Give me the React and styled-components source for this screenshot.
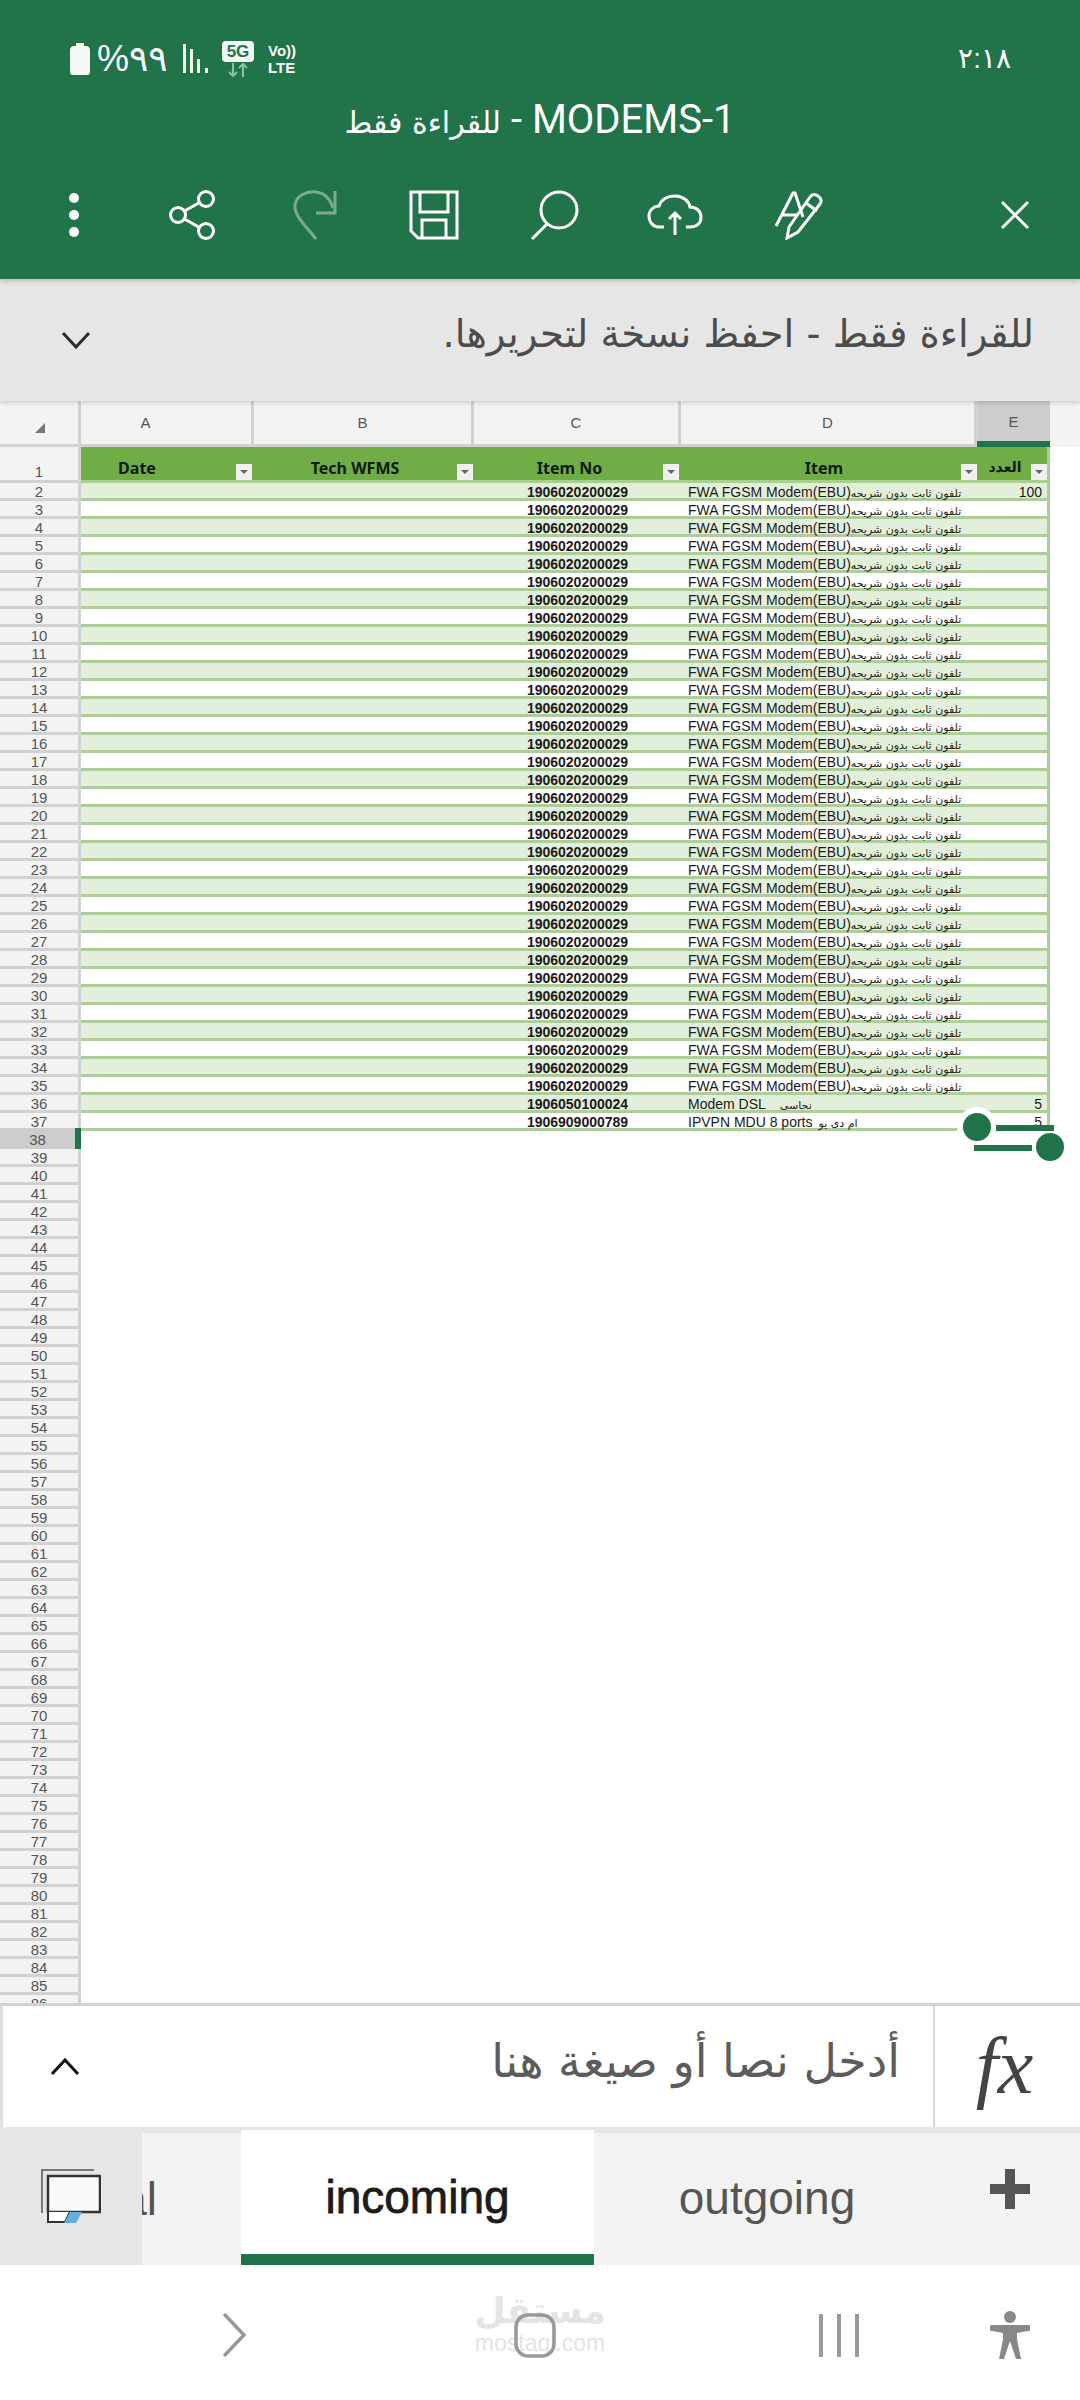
import React from 'react'
import styled, { createGlobalStyle } from 'styled-components'

const GREEN = '#21734a'
const ARABIC = '"DejaVu Sans", "Noto Sans", sans-serif'

const GlobalStyle = createGlobalStyle`
  html, body { margin: 0; padding: 0; background: #fff; }
  * { box-sizing: border-box; }
`

const FWA = ['FWA FGSM Modem(EBU)', 'تلفون ثابت بدون شريحه', 0]

function rowData(n) {
  if (n === 36) return { no: '1906050100024', item: ['Modem DSL', 'نحاسى', 14], qty: '5' }
  if (n === 37) return { no: '1906909000789', item: ['IPVPN MDU 8 ports', 'ام دى يو', 6], qty: '5' }
  return { no: '1906020200029', item: FWA, qty: n === 2 ? '100' : '' }
}

const range = (a, b) => Array.from({ length: b - a + 1 }, (_, i) => a + i)

function Icon({ w, h, children }) {
  return (
    <svg width={w} height={h} viewBox={`0 0 ${w} ${h}`} fill="none" stroke="#fff" strokeWidth="3">
      {children}
    </svg>
  )
}

function FilterButton({ $right }) {
  return (
    <Filter $right={$right}>
      <FilterArrow />
    </Filter>
  )
}

export default function App() {
  return (
    <Screen>
      <GlobalStyle />
      <TopBar>
        <StatusBar>
          <StatusLeft>
            <svg width="22" height="32" viewBox="0 0 22 32">
              <path d="M7 0h8v3h3a4 4 0 0 1 3 3v23a3 3 0 0 1-3 3H4a3 3 0 0 1-3-3V6a4 4 0 0 1 3-3h3z" fill="#f4f9f6" />
            </svg>
            <Percent>%٩٩</Percent>
            <svg width="30" height="32" viewBox="0 0 30 32" fill="#eef5f1">
              <rect x="1" y="1" width="3" height="29" />
              <rect x="8" y="6" width="3" height="24" />
              <rect x="15" y="16" width="3" height="14" />
              <rect x="23" y="25" width="3" height="5" />
            </svg>
            <FiveG>
              <FiveGBadge>5G</FiveGBadge>
              <svg width="24" height="14" viewBox="0 0 24 14" fill="none" stroke="#8fbfa6" strokeWidth="2">
                <path d="M7 0v13M3 9l4 4 4-4M17 14V1M13 5l4-4 4 4" />
              </svg>
            </FiveG>
            <Volte>
              <span>Vo))</span>
              <span>LTE</span>
            </Volte>
          </StatusLeft>
          <Clock>٢:١٨</Clock>
        </StatusBar>
        <Title dir="rtl">
          MODEMS-1 - <TitleArabic>للقراءة فقط</TitleArabic>
        </Title>
        <Toolbar>
          <ToolSlot $x={74}>
            <svg width="12" height="44" viewBox="0 0 12 44" fill="#fff">
              <ellipse cx="6" cy="5" rx="5" ry="5" />
              <ellipse cx="6" cy="22" rx="5" ry="5" />
              <ellipse cx="6" cy="39" rx="5" ry="5" />
            </svg>
          </ToolSlot>
          <ToolSlot $x={193}>
            <Icon w={48} h={50}>
              <circle cx="37" cy="9" r="7.5" />
              <circle cx="9" cy="25" r="7.5" />
              <circle cx="37" cy="41" r="7.5" />
              <path d="M15.5 21 30.5 12.5M15.5 29 30.5 37.5" />
            </Icon>
          </ToolSlot>
          <ToolSlot $x={315}>
            <Icon w={46} h={50}>
              <g opacity="0.4">
                <path d="M24 49C14 36 2 26 3 15 4 6 14 1 24 2c9 1 15 8 17 16" />
                <path d="M43 1v22H24" />
              </g>
            </Icon>
          </ToolSlot>
          <ToolSlot $x={434}>
            <Icon w={50} h={50}>
              <path d="M2 2h46v46H9l-7-7z" />
              <path d="M11 2v20h28V2M13 48V30h24v18" />
            </Icon>
          </ToolSlot>
          <ToolSlot $x={554}>
            <Icon w={50} h={50}>
              <ellipse cx="30" cy="20" rx="18" ry="18" />
              <path d="M19 33 3 49" />
            </Icon>
          </ToolSlot>
          <ToolSlot $x={675}>
            <Icon w={56} h={42}>
              <path d="M17 33H12C6 33 2 28 2 22c0-6 5-10 10-10C14 6 20 2 28 2c8 0 14 5 15 11 6 0 11 4 11 10s-4 10-11 10h-4" />
              <path d="M28 41V19M22 25l6-6 6 6" />
            </Icon>
          </ToolSlot>
          <ToolSlot $x={799}>
            <Icon w={50} h={50}>
              <path d="M2 36 19 3h2l8 24M9 25h14" />
              <path d="M13 48l2-11 21-30c2-3 5-3 8-1s4 5 2 8L24 42z" />
              <path d="M32 13l11 8" />
            </Icon>
          </ToolSlot>
          <ToolSlot $x={1015}>
            <Icon w={30} h={30}>
              <path d="M2 2l26 26M28 2 2 28" />
            </Icon>
          </ToolSlot>
        </Toolbar>
      </TopBar>

      <ReadOnlyBar>
        <svg width="30" height="18" viewBox="0 0 30 18" fill="none" stroke="#2c2c2c" strokeWidth="3">
          <path d="M2 2l13 14L28 2" />
        </svg>
        <ReadOnlyText dir="rtl">للقراءة فقط - احفظ نسخة لتحريرها.</ReadOnlyText>
      </ReadOnlyBar>

      <Sheet>
        <ColumnHeaders>
          <Corner>
            <CornerMark />
          </Corner>
          <ColumnHead $w={173} $pad={41}>A</ColumnHead>
          <ColumnHead $w={220}>B</ColumnHead>
          <ColumnHead $w={207}>C</ColumnHead>
          <ColumnHead $w={296}>D</ColumnHead>
          <ColumnHead $w={73} $selected>E</ColumnHead>
        </ColumnHeaders>

        <Row>
          <RowNum $first>1</RowNum>
          <HeadCell $w={173}>
            <HeadLabel $shift={-61}>Date</HeadLabel>
            <FilterButton $right={2} />
          </HeadCell>
          <HeadCell $w={220}>
            <HeadLabel $shift={-18}>Tech WFMS</HeadLabel>
            <FilterButton $right={1} />
          </HeadCell>
          <HeadCell $w={207}>
            <HeadLabel $shift={-16}>Item No</HeadLabel>
            <FilterButton $right={2} />
          </HeadCell>
          <HeadCell $w={296}>
            <HeadLabel $shift={-10}>Item</HeadLabel>
            <FilterButton $right={0} />
          </HeadCell>
          <HeadCell $w={73} $last>
            <ArabicHead>العدد</ArabicHead>
            <FilterButton $right={0} />
          </HeadCell>
        </Row>

        {range(2, 37).map((n) => {
          const d = rowData(n)
          return (
            <Row key={n}>
              <RowNum>{n}</RowNum>
              <Band $alt={n % 2 === 0}>
                <Cell $w={173} />
                <Cell $w={220} />
                <NumberCell $w={207}>{d.no}</NumberCell>
                <ItemCell $w={296}>
                  {d.item[0]}
                  <Gap $w={d.item[2]} />
                  <ArabicPart>{d.item[1]}</ArabicPart>
                </ItemCell>
                <QtyCell $w={70}>{d.qty}</QtyCell>
              </Band>
            </Row>
          )
        })}

        {range(38, 86).map((n) => (
          <Row key={n}>
            <RowNum $selected={n === 38}>{n}</RowNum>
          </Row>
        ))}

        <Handle $x={963} $y={1113} $ring />
        <HandleLine $x={996} $y={1125} />
        <HandleLine $x={974} $y={1145} />
        <Handle $x={1036} $y={1133} />
      </Sheet>

      <FormulaBar>
        <FormulaInput>
          <svg width="30" height="18" viewBox="0 0 30 18" fill="none" stroke="#111" strokeWidth="3">
            <path d="M2 16 15 2l13 14" />
          </svg>
          <FormulaHint dir="rtl">أدخل نصا أو صيغة هنا</FormulaHint>
        </FormulaInput>
        <FxCell>fx</FxCell>
      </FormulaBar>

      <TabBar>
        <SheetsButton>
          <svg width="60" height="54" viewBox="0 0 60 54" fill="none">
            <path d="M1 44V1h52" stroke="#777" strokeWidth="2" />
            <rect x="7" y="7" width="52" height="36" fill="#fafafa" stroke="#333" strokeWidth="2.5" />
            <path d="M7 43v10h17l5-10" stroke="#333" strokeWidth="2" fill="#fff" />
            <path d="M29 43h12l-6 11H23z" fill="#63ade2" />
          </svg>
        </SheetsButton>
        <TabScroller>
          <Clipped>
            <TabText>Total</TabText>
          </Clipped>
          <ActiveTab>incoming</ActiveTab>
          <PlainTab>outgoing</PlainTab>
          <AddButton>
            <svg width="40" height="40" viewBox="0 0 40 40" fill="#555">
              <rect x="15" y="0" width="10" height="40" />
              <rect x="0" y="15" width="40" height="10" />
            </svg>
          </AddButton>
        </TabScroller>
      </TabBar>

      <NavBar>
        <Watermark>
          <WatermarkAr>مستقل</WatermarkAr>
          <WatermarkEn>mostaql.com</WatermarkEn>
        </Watermark>
        <NavSlot $x={234}>
          <svg width="26" height="46" viewBox="0 0 26 46" fill="none" stroke="#999" strokeWidth="3.5">
            <path d="M3 2l20 21L3 44" />
          </svg>
        </NavSlot>
        <NavSlot $x={535}>
          <svg width="42" height="45" viewBox="0 0 42 45" fill="none" stroke="#999" strokeWidth="3.5">
            <rect x="2" y="2" width="38" height="41" rx="12" />
          </svg>
        </NavSlot>
        <NavSlot $x={839}>
          <svg width="40" height="43" viewBox="0 0 40 43" fill="#999">
            <rect x="0" y="0" width="4" height="43" />
            <rect x="18" y="0" width="4" height="43" />
            <rect x="36" y="0" width="4" height="43" />
          </svg>
        </NavSlot>
        <NavSlot $x={1010}>
          <svg width="40" height="48" viewBox="0 0 40 48" fill="#888">
            <circle cx="20" cy="6" r="6" />
            <path d="M2 14h36a2 2 0 0 1 0 6l-11 2v6l4 20h-5l-6-18-6 18H9l4-20v-6L2 20a2 2 0 0 1 0-6z" />
          </svg>
        </NavSlot>
      </NavBar>
    </Screen>
  )
}

const Screen = styled.div`
  width: 1080px;
  height: 2400px;
  display: flex;
  flex-direction: column;
  overflow: hidden;
  background: #fff;
  font-family: Roboto, "DejaVu Sans", sans-serif;
`

const TopBar = styled.header`
  height: 279px;
  flex: none;
  background: ${GREEN};
  color: #fff;
  display: flex;
  flex-direction: column;
  box-shadow: 0 2px 5px rgba(0, 0, 0, 0.2);
  position: relative;
  z-index: 2;
`

const StatusBar = styled.div`
  height: 74px;
  padding: 44px 69px 0;
  display: flex;
  justify-content: space-between;
  align-items: center;
`

const StatusLeft = styled.div`
  display: flex;
  align-items: center;
  gap: 6px;
`

const Percent = styled.span`
  font: 36px "Liberation Sans", ${ARABIC};
  width: 79px;
  letter-spacing: -1px;
`

const FiveG = styled.div`
  display: flex;
  flex-direction: column;
  align-items: center;
  margin-left: 4px;
  gap: 1px;
`

const FiveGBadge = styled.div`
  width: 32px;
  height: 21px;
  border-radius: 4px;
  background: #f2f7f4;
  color: ${GREEN};
  font: bold 17px/21px "Liberation Sans", sans-serif;
  text-align: center;
`

const Volte = styled.div`
  display: flex;
  flex-direction: column;
  margin-left: 8px;
  font: bold 15px/17px "Liberation Sans", sans-serif;
`

const Clock = styled.span`
  font: 28px "Liberation Sans", ${ARABIC};
  margin-top: -2px;
`

const Title = styled.div`
  margin-top: 24px;
  text-align: center;
  font: 40px/44px Roboto, ${ARABIC};
`

const TitleArabic = styled.span`
  font: 30px ${ARABIC};
`

const Toolbar = styled.div`
  flex: 1;
  display: flex;
  align-items: center;
  padding-top: 8px;
  position: relative;
`

const ToolSlot = styled.div`
  position: absolute;
  left: ${(p) => p.$x}px;
  transform: translateX(-50%);
  display: flex;
`

const ReadOnlyBar = styled.div`
  height: 122px;
  flex: none;
  background: #e6e6e6;
  display: flex;
  align-items: center;
  justify-content: space-between;
  padding: 0 46px 0 61px;
  box-shadow: 0 2px 4px rgba(0, 0, 0, 0.15);
  position: relative;
  z-index: 1;
`

const ReadOnlyText = styled.div`
  font: 38.6px ${ARABIC};
  color: #4c4c4c;
  margin-top: -14px;
`

const Sheet = styled.div`
  flex: 1;
  min-height: 0;
  overflow: hidden;
  position: relative;
  background: #fff;
  display: flex;
  flex-direction: column;
`

const ColumnHeaders = styled.div`
  height: 46px;
  flex: none;
  display: flex;
  background: #f3f3f3;
`

const Corner = styled.div`
  width: 81px;
  border-right: 3px solid #d2d2d2;
  border-bottom: 3px solid #d2d2d2;
  position: relative;
`

const CornerMark = styled.div`
  position: absolute;
  right: 33px;
  bottom: 11px;
  border-style: solid;
  border-width: 0 0 10px 10px;
  border-color: transparent transparent #777 transparent;
`

const ColumnHead = styled.div`
  width: ${(p) => p.$w}px;
  padding-right: ${(p) => p.$pad || 0}px;
  display: flex;
  align-items: center;
  justify-content: center;
  font: 15px "Liberation Sans", sans-serif;
  color: #555;
  background: ${(p) => (p.$selected ? '#cdcdcd' : 'transparent')};
  border-right: ${(p) => (p.$selected ? '0' : '3px solid #d2d2d2')};
  border-bottom: ${(p) => (p.$selected ? `6px solid ${GREEN}` : '3px solid #d2d2d2')};
`

const Row = styled.div`
  display: flex;
  flex: none;
`

const RowNum = styled.div`
  width: 81px;
  flex: none;
  height: ${(p) => (p.$first ? 36 : p.$selected ? 21 : 18)}px;
  margin-top: ${(p) => (p.$selected ? -3 : 0)}px;
  padding-top: ${(p) => (p.$selected ? 3 : 0)}px;
  display: flex;
  align-items: ${(p) => (p.$first ? 'flex-end' : 'flex-start')};
  justify-content: center;
  font: 15px/${(p) => (p.$first ? 16 : 18)}px "Liberation Sans", sans-serif;
  color: #555;
  background: ${(p) => (p.$selected ? '#cdcdcd' : '#f3f3f3')};
  border-right: ${(p) => (p.$selected ? `6px solid ${GREEN}` : '3px solid #d2d2d2')};
  border-bottom: ${(p) => (p.$selected ? '0' : '3px solid #d2d2d2')};
`

const HeadCell = styled.div`
  width: ${(p) => p.$w}px;
  height: 36px;
  flex: none;
  background: #70ad47;
  border-bottom: 3px solid #a9d08e;
  border-right: ${(p) => (p.$last ? '3px solid #a9d08e' : '0')};
  display: flex;
  align-items: center;
  justify-content: center;
  position: relative;
`

const HeadLabel = styled.span`
  font: bold 16px "Noto Sans", sans-serif;
  color: #0d1a08;
  margin-left: ${(p) => p.$shift}px;
  margin-top: 9px;
`

const ArabicHead = styled.span`
  font: bold 14px ${ARABIC};
  color: #0d1a08;
  margin-left: -14px;
  margin-top: 6px;
`

const Filter = styled.div`
  position: absolute;
  right: ${(p) => p.$right}px;
  bottom: 0;
  width: 16px;
  height: 16px;
  background: #f0f0f0;
  display: flex;
  align-items: center;
  justify-content: center;
`

const FilterArrow = styled.div`
  border-style: solid;
  border-width: 4px 4px 0 4px;
  border-color: #666 transparent transparent transparent;
`

const Band = styled.div`
  display: flex;
  height: 18px;
  width: 969px;
  background: ${(p) => (p.$alt ? '#e2efda' : '#fff')};
  border-bottom: 3px solid #aecd9a;
  border-right: 3px solid #aecd9a;
`

const Cell = styled.div`
  width: ${(p) => p.$w}px;
  flex: none;
  font: 14px/18px "Liberation Sans", sans-serif;
  color: #1a1a1a;
  white-space: nowrap;
`

const NumberCell = styled(Cell)`
  font-weight: bold;
  text-align: center;
`

const ItemCell = styled(Cell)`
  padding-left: 7px;
`

const ArabicPart = styled.span`
  font: 11px ${ARABIC};
  color: #222;
`

const Gap = styled.span`
  display: inline-block;
  width: ${(p) => p.$w}px;
`

const QtyCell = styled(Cell)`
  text-align: right;
  padding-right: 5px;
`

const Handle = styled.div`
  position: absolute;
  left: ${(p) => p.$x}px;
  top: ${(p) => p.$y - 401}px;
  width: 28px;
  height: 28px;
  border-radius: 50%;
  background: ${GREEN};
  box-shadow: ${(p) => (p.$ring ? '0 0 0 6px #fff' : 'none')};
`

const HandleLine = styled.div`
  position: absolute;
  left: ${(p) => p.$x}px;
  top: ${(p) => p.$y - 401}px;
  width: 58px;
  height: 6px;
  background: ${GREEN};
`

const FormulaBar = styled.div`
  height: 124px;
  flex: none;
  display: flex;
  border-top: 3px solid #d2d2d2;
  background: #fff;
  position: relative;
  z-index: 1;
`

const FormulaInput = styled.div`
  flex: 1;
  display: flex;
  align-items: center;
  justify-content: space-between;
  padding: 0 33px 0 47px;
  border-left: 3px solid #e0e0e0;
`

const FormulaHint = styled.div`
  font: 46px ${ARABIC};
  color: #5c5c5c;
  margin-top: -12px;
`

const FxCell = styled.div`
  width: 147px;
  flex: none;
  border-left: 2px solid #d8d8d8;
  display: flex;
  align-items: center;
  justify-content: center;
  padding-right: 6px;
  font: italic 80px "Liberation Serif", serif;
  color: #444;
`

const TabBar = styled.div`
  height: 138px;
  flex: none;
  display: flex;
  background: #e6e6e6;
`

const SheetsButton = styled.div`
  width: 142px;
  flex: none;
  display: flex;
  align-items: center;
  justify-content: center;
  background: #e6e6e6;
`

const TabScroller = styled.div`
  flex: 1;
  display: flex;
  margin-top: 6px;
  background: #f3f3f3;
`

const Clipped = styled.div`
  width: 99px;
  flex: none;
  overflow: hidden;
  display: flex;
  justify-content: flex-end;
  align-items: center;
  padding-right: 84px;
`

const TabText = styled.span`
  font: 46px "Liberation Sans", sans-serif;
  color: #555;
`

const ActiveTab = styled.div`
  width: 353px;
  flex: none;
  margin-top: -3px;
  padding-top: 9px;
  background: #fff;
  border-bottom: 11px solid ${GREEN};
  display: flex;
  align-items: center;
  justify-content: center;
  font: 46px "Liberation Sans", sans-serif;
  color: #1c1c1c;
  -webkit-text-stroke: 0.8px #1c1c1c;
`

const PlainTab = styled.div`
  width: 346px;
  flex: none;
  padding-bottom: 2px;
  display: flex;
  align-items: center;
  justify-content: center;
  font: 46px "Liberation Sans", sans-serif;
  color: #555;
`

const AddButton = styled.div`
  flex: 1;
  display: flex;
  align-items: center;
  justify-content: center;
  padding-bottom: 20px;
`

const NavBar = styled.nav`
  height: 135px;
  flex: none;
  background: #fff;
  position: relative;
  display: flex;
  align-items: center;
  padding-top: 5px;
`

const NavSlot = styled.div`
  position: absolute;
  left: ${(p) => p.$x}px;
  transform: translateX(-50%);
  display: flex;
`

const Watermark = styled.div`
  position: absolute;
  left: 474px;
  top: 24px;
  width: 132px;
  display: flex;
  flex-direction: column;
  align-items: center;
  color: #e4e4e4;
`

const WatermarkAr = styled.span`
  font: bold 36px/44px ${ARABIC};
`

const WatermarkEn = styled.span`
  font: 23px/20px "Liberation Sans", sans-serif;
`
